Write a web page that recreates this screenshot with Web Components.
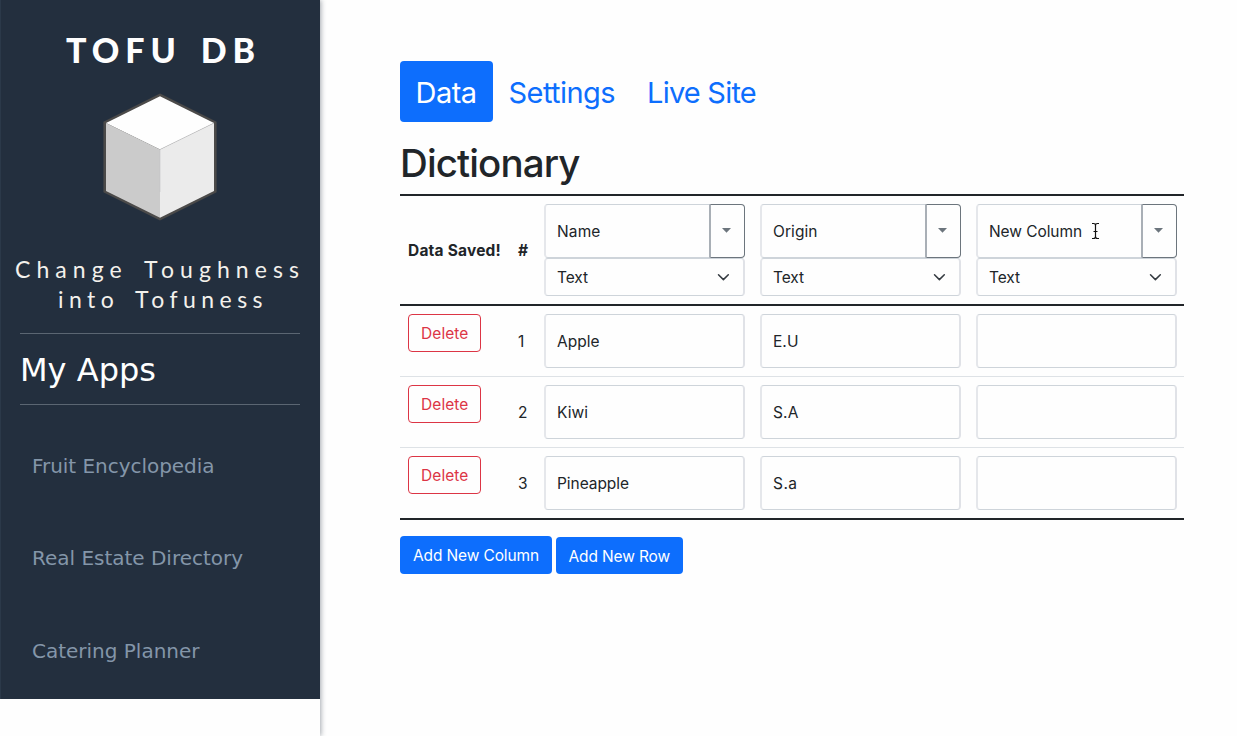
<!DOCTYPE html>
<html lang="en">
<head>
<meta charset="utf-8">
<title>Tofu DB</title>
<style>
html,body{margin:0;height:100%;background:#fefefe}
body{overflow:hidden;font-family:Inter,"Liberation Sans",sans-serif;font-size:15.5px;color:#212529}
</style>
</head>
<body>
<tofu-app></tofu-app>
<script>
const define=(name,html,setup)=>{
  customElements.define(name,class extends HTMLElement{
    constructor(){super();this.attachShadow({mode:'open'}).innerHTML=html}
    connectedCallback(){if(setup)setup.call(this,this.shadowRoot)}
  });
};

/* Tracks its text out (or in) to an exact advance width. */
define('fit-text',`<style>:host{display:inline-block;white-space:pre;line-height:1;vertical-align:top;justify-self:start}</style><slot></slot>`,function(){
  const w=parseFloat(this.getAttribute('w'));
  if(!w)return;
  this.style.letterSpacing='0px';
  const n=this.textContent.length, nat=this.getBoundingClientRect().width;
  this.style.letterSpacing=((w-nat)/n).toFixed(3)+'px';
});

define('tofu-cube',`<style>:host{display:block;width:116px;height:130px}svg{display:block}</style>
<svg width="116" height="130" viewBox="102 92 116 130">
<path d="M160 95 215.300 122.500V191.500L160 219 104.700 191.500V122.500Z" fill="#4b4a49" stroke="#4b4a49" stroke-width="2.600"/>
<path d="M160 96.300 214 123 160 149.500 106 123Z" fill="#fefefe"/>
<path d="M106 123 160 149.500V217.700L106 191Z" fill="#cbcbcb"/>
<path d="M214 123 160 149.500V217.700L214 191Z" fill="#ebebeb"/>
<path d="M160 149.500V192M160 149.500 214 123" stroke="#c4c4c6" stroke-width=".6" fill="none"/>
</svg>`);

define('app-link',`<style>:host{display:block;height:92.6px;flex:none;padding-left:32px;color:#8496a9;font-size:20px;box-sizing:border-box}</style><slot></slot>`);

define('side-bar',`<style>
:host{display:block;width:320px;height:100%;flex:none;background:#fefefe;box-shadow:1px 0 5px rgba(35,47,62,.42);font-family:"DejaVu Sans",sans-serif}
.panel{height:699px;background:#232f3e;box-shadow:inset 1px 0 #2b3949;overflow:hidden}
.brand{font-family:Lato,sans-serif;font-weight:900;font-size:34px;color:#fefefe;word-spacing:5px;padding:33px 0 0 66px;height:58px;box-sizing:border-box}
tofu-cube{margin:34px 0 0 102px}
.tag{font-family:Lato,sans-serif;font-size:23px;color:#f3f1ec;word-spacing:5px;height:60px;margin-top:35.500px;display:grid;grid-template-rows:30px 30px}
.tag :first-child{margin-left:15px}.tag :last-child{margin-left:58px}
h2{margin:15.500px 20px 0;height:72px;box-sizing:border-box;border:solid #5b6672;border-width:1px 0;font-size:32px;font-weight:400;color:#fff;padding-top:20px}
nav{padding-top:50.800px}
</style><div class="panel">
<div class="brand"><fit-text w="195">TOFU DB</fit-text></div>
<tofu-cube></tofu-cube>
<div class="tag"><fit-text w="290">Change Toughness</fit-text><fit-text w="210">into Tofuness</fit-text></div>
<h2><fit-text w="136">My Apps</fit-text></h2>
<nav><app-link><fit-text w="182.5">Fruit Encyclopedia</fit-text></app-link><app-link><fit-text w="211">Real Estate Directory</fit-text></app-link><app-link><fit-text w="167.5">Catering Planner</fit-text></app-link></nav>
</div>`);

define('nav-pill',`<style>:host{display:flex;align-items:center;height:61px;padding:2px 16.500px 0 15.500px;box-sizing:border-box;border-radius:4px;color:#0d6efd;font-size:29px}:host([active]){background:#0d6efd;color:#fff}</style><slot></slot>`);

define('text-field',`<style>:host{display:flex;align-items:center;box-sizing:border-box;width:201px;height:54px;padding:2px 0 0 11px;border:solid #ced4da;border-width:1px 2px;border-left-color:#e5e7eb;border-right-color:#e0e2e7;border-radius:4px}</style><slot></slot>`);

define('type-select',`<style>:host{display:flex;align-items:center;justify-content:space-between;box-sizing:border-box;width:201px;height:38px;padding:0 12px 0 11px;border:solid #ced4da;border-width:1px 2px;border-left-color:#e5e7eb;border-right-color:#e0e2e7;border-radius:4px}::slotted(*){margin-top:2px}</style><slot></slot><svg width="16" height="16" viewBox="0 0 16 16"><path d="m3.500 5.700 4.900 4.900 4.900-4.900" fill="none" stroke="#343a40" stroke-width="1.500" stroke-linecap="round" stroke-linejoin="round"/></svg>`);

define('column-head',`<style>:host{display:block}.top{display:flex}.top text-field{width:165px;border-right:0;border-radius:4px 0 0 4px}
button{all:unset;box-sizing:border-box;width:36px;height:54px;border:solid #6c757d;border-width:1px 1px 1px 2px;border-left-color:#a9afb6;border-radius:0 4px 4px 0;display:flex;justify-content:center;align-items:center}
svg{display:block;margin:-1px 2px 0 0}</style>
<div class="top"><text-field><slot></slot></text-field><button aria-label="Column options"><svg width="9" height="5" viewBox="0 0 9 5"><path d="M0 0H9L4.500 4.700Z" fill="#6c757d"/></svg></button></div>
<type-select><fit-text w="31">Text</fit-text></type-select>`);

define('push-button',`<style>:host{display:flex;align-items:center;box-sizing:border-box;height:38px;padding:2px 12.500px 0 13px;border-radius:4px;background:#0d6efd;color:#fff}:host([danger]){background:none;border:1px solid #dc3545;color:#dc3545;padding:2px 12px 0;width:73px}</style><slot></slot>`);

define('data-row',`<style>:host{display:grid;grid-template-columns:110px 26px repeat(3,216px);padding:8px;box-sizing:border-box;border-bottom:1px solid #dee2e6;width:784.400px}
:host([head]){border:solid #212529;border-width:2px 0}:host([last]){border-bottom:2px solid #212529}
::slotted(.num){align-self:center}::slotted(.bold){font-weight:700;align-self:center;margin-top:2px}</style><slot></slot>`);

define('data-table',`<style>:host{display:block;width:784.400px}</style>`,function(root){
  const f=(t,w)=>t?`<fit-text w="${w}">${t}</fit-text>`:'';
  let h=`<data-row head><fit-text class="bold" w="93">Data Saved!</fit-text><fit-text class="bold" w="11">#</fit-text>`+
    [['Name',43.5],['Origin',44.5],['New Column',93]].map(c=>`<column-head>${f(...c)}</column-head>`).join('')+`</data-row>`;
  [[['Apple',42.5],['E.U',25.5]],[['Kiwi',31],['S.A',25.5]],[['Pineapple',72],['S.a',24.5]]].forEach((r,i)=>{
    h+=`<data-row ${i==2?'last':''}><push-button danger>${f('Delete',47.5)}</push-button><span class="num">${i+1}</span>`+
      [...r,['',0]].map(c=>`<text-field>${f(...c)}</text-field>`).join('')+`</data-row>`;
  });
  root.innerHTML+=h;
});

define('text-cursor',`<style>:host{position:absolute;left:1090px;top:222px;width:11px;height:18px}svg{display:block}</style><svg width="11" height="18" viewBox="0 0 11 18"><path d="M2 1.500H3.500Q5.500 1.500 5.500 3.500V14.500Q5.500 16.500 3.500 16.500H2M9 1.500H7.500Q5.500 1.500 5.500 3.500M9 16.500H7.500Q5.500 16.500 5.500 14.500M3.500 9.500H7.500" fill="none" stroke="#111" stroke-width="1.200"/></svg>`);

define('tofu-app',`<style>
:host{display:flex;height:100vh;position:relative}
main{padding:61px 0 0 80px}
.tabs{display:flex}
h1{margin:0;font-size:38.500px;font-weight:500;height:72px;padding-top:21.500px;box-sizing:border-box}
.actions{display:flex;gap:4px;margin-top:16px}
.actions>:last-child{height:37px;margin-top:1px}
</style>
<side-bar></side-bar>
<main>
<div class="tabs"><nav-pill active><fit-text w="61">Data</fit-text></nav-pill><nav-pill><fit-text w="106.5">Settings</fit-text></nav-pill><nav-pill><fit-text w="109">Live Site</fit-text></nav-pill></div>
<h1><fit-text w="179.5">Dictionary</fit-text></h1>
<data-table></data-table>
<div class="actions"><push-button><fit-text w="126">Add New Column</fit-text></push-button><push-button><fit-text w="101.5">Add New Row</fit-text></push-button></div>
</main>
<text-cursor></text-cursor>`);
</script>
</body>
</html>
